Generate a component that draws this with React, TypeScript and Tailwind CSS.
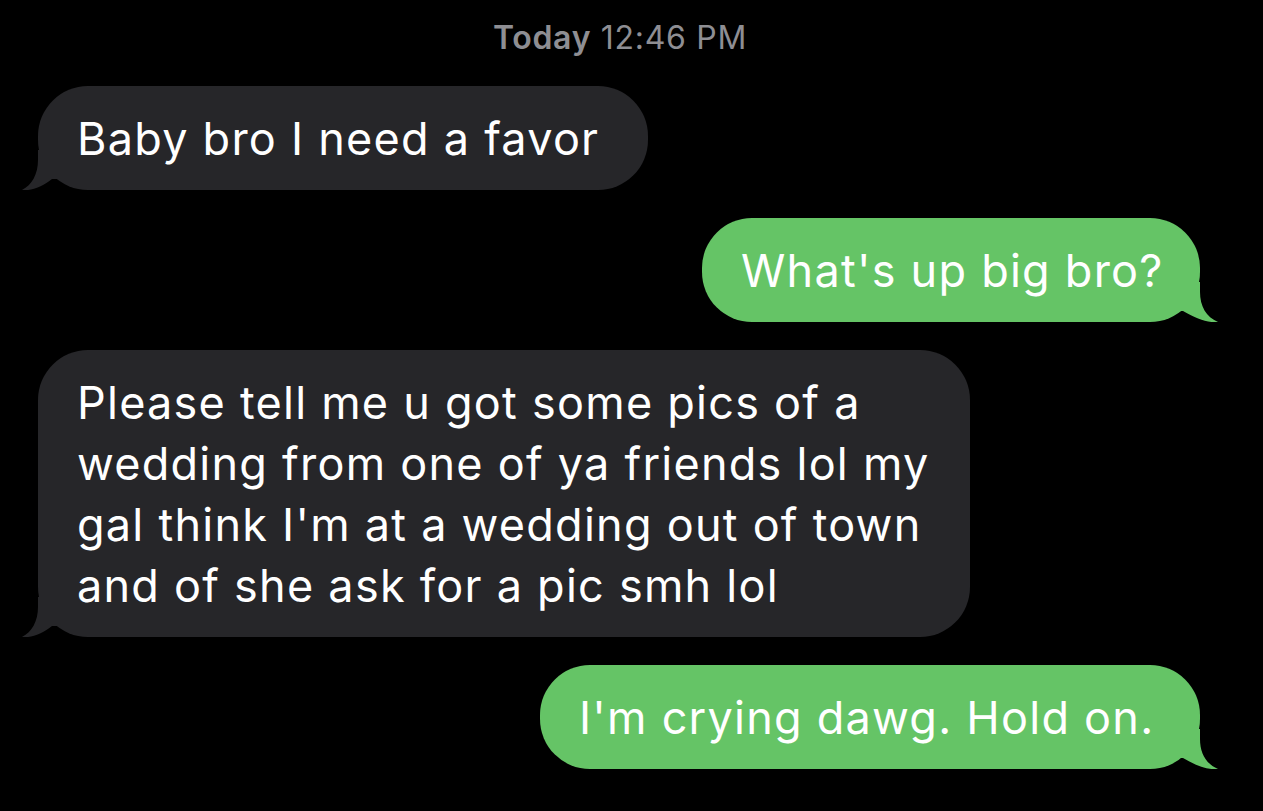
import React from "react";

const FONT = { fontFamily: "Inter, 'Noto Sans', 'Liberation Sans', sans-serif" };

function TailLeft({ color }: { color: string }) {
  return (
    <svg
      className="absolute bottom-0 left-[-16px]"
      width="60"
      height="40"
      viewBox="0 0 60 40"
      fill={color}
    >
      <path d="M60 0 H16 V10 C16 24 10 35 0 40 C10 41 20 37 30 29 L60 29 Z" />
    </svg>
  );
}

function TailRight({ color }: { color: string }) {
  return (
    <svg
      className="absolute bottom-0 right-[-18px]"
      width="62"
      height="40"
      viewBox="0 0 62 40"
      fill={color}
    >
      <path d="M0 0 H44 V10 C44 24 50 35 62 40 C51 41 41 37 27 29 L0 29 Z" />
    </svg>
  );
}

function Bubble({
  side,
  width,
  children,
}: {
  side: "left" | "right";
  width: string;
  children: React.ReactNode;
}) {
  const dark = side === "left";
  const color = dark ? "#262629" : "#65c466";
  return (
    <div
      className={`relative ${width} ${
        dark ? "bg-[#262629] self-start" : "bg-[#65c466] self-end"
      } rounded-[50px] py-[21.5px] pl-[39px] pr-[20px] text-white text-[45px] leading-[61px] tracking-[1.25px]`}
    >
      {dark ? <TailLeft color={color} /> : <TailRight color={color} />}
      <div className="relative">{children}</div>
    </div>
  );
}

export default function App() {
  return (
    <div
      className="w-[1263px] h-[811px] bg-black overflow-hidden flex flex-col pl-[38px] pr-[63px]"
      style={FONT}
    >
      <div className="pt-[19px] h-[86px] text-center text-[32px] leading-[38px] tracking-[0.7px] text-[#8e8e93] pl-[2px]">
        <span className="font-semibold">Today</span> <span>12:46 PM</span>
      </div>
      <div className="flex flex-col gap-[28px]">
        <Bubble side="left" width="w-[610px]">
          Baby bro I need a favor
        </Bubble>
        <Bubble side="right" width="w-[498px]">
          What's up big bro?
        </Bubble>
        <Bubble side="left" width="w-[932px]">
          <div className="whitespace-nowrap">Please tell me u got some pics of a</div>
          <div className="whitespace-nowrap">wedding from one of ya friends lol my</div>
          <div className="whitespace-nowrap">gal think I'm at a wedding out of town</div>
          <div className="whitespace-nowrap">and of she ask for a pic smh lol</div>
        </Bubble>
        <Bubble side="right" width="w-[660px]">
          I'm crying dawg. Hold on.
        </Bubble>
      </div>
    </div>
  );
}
